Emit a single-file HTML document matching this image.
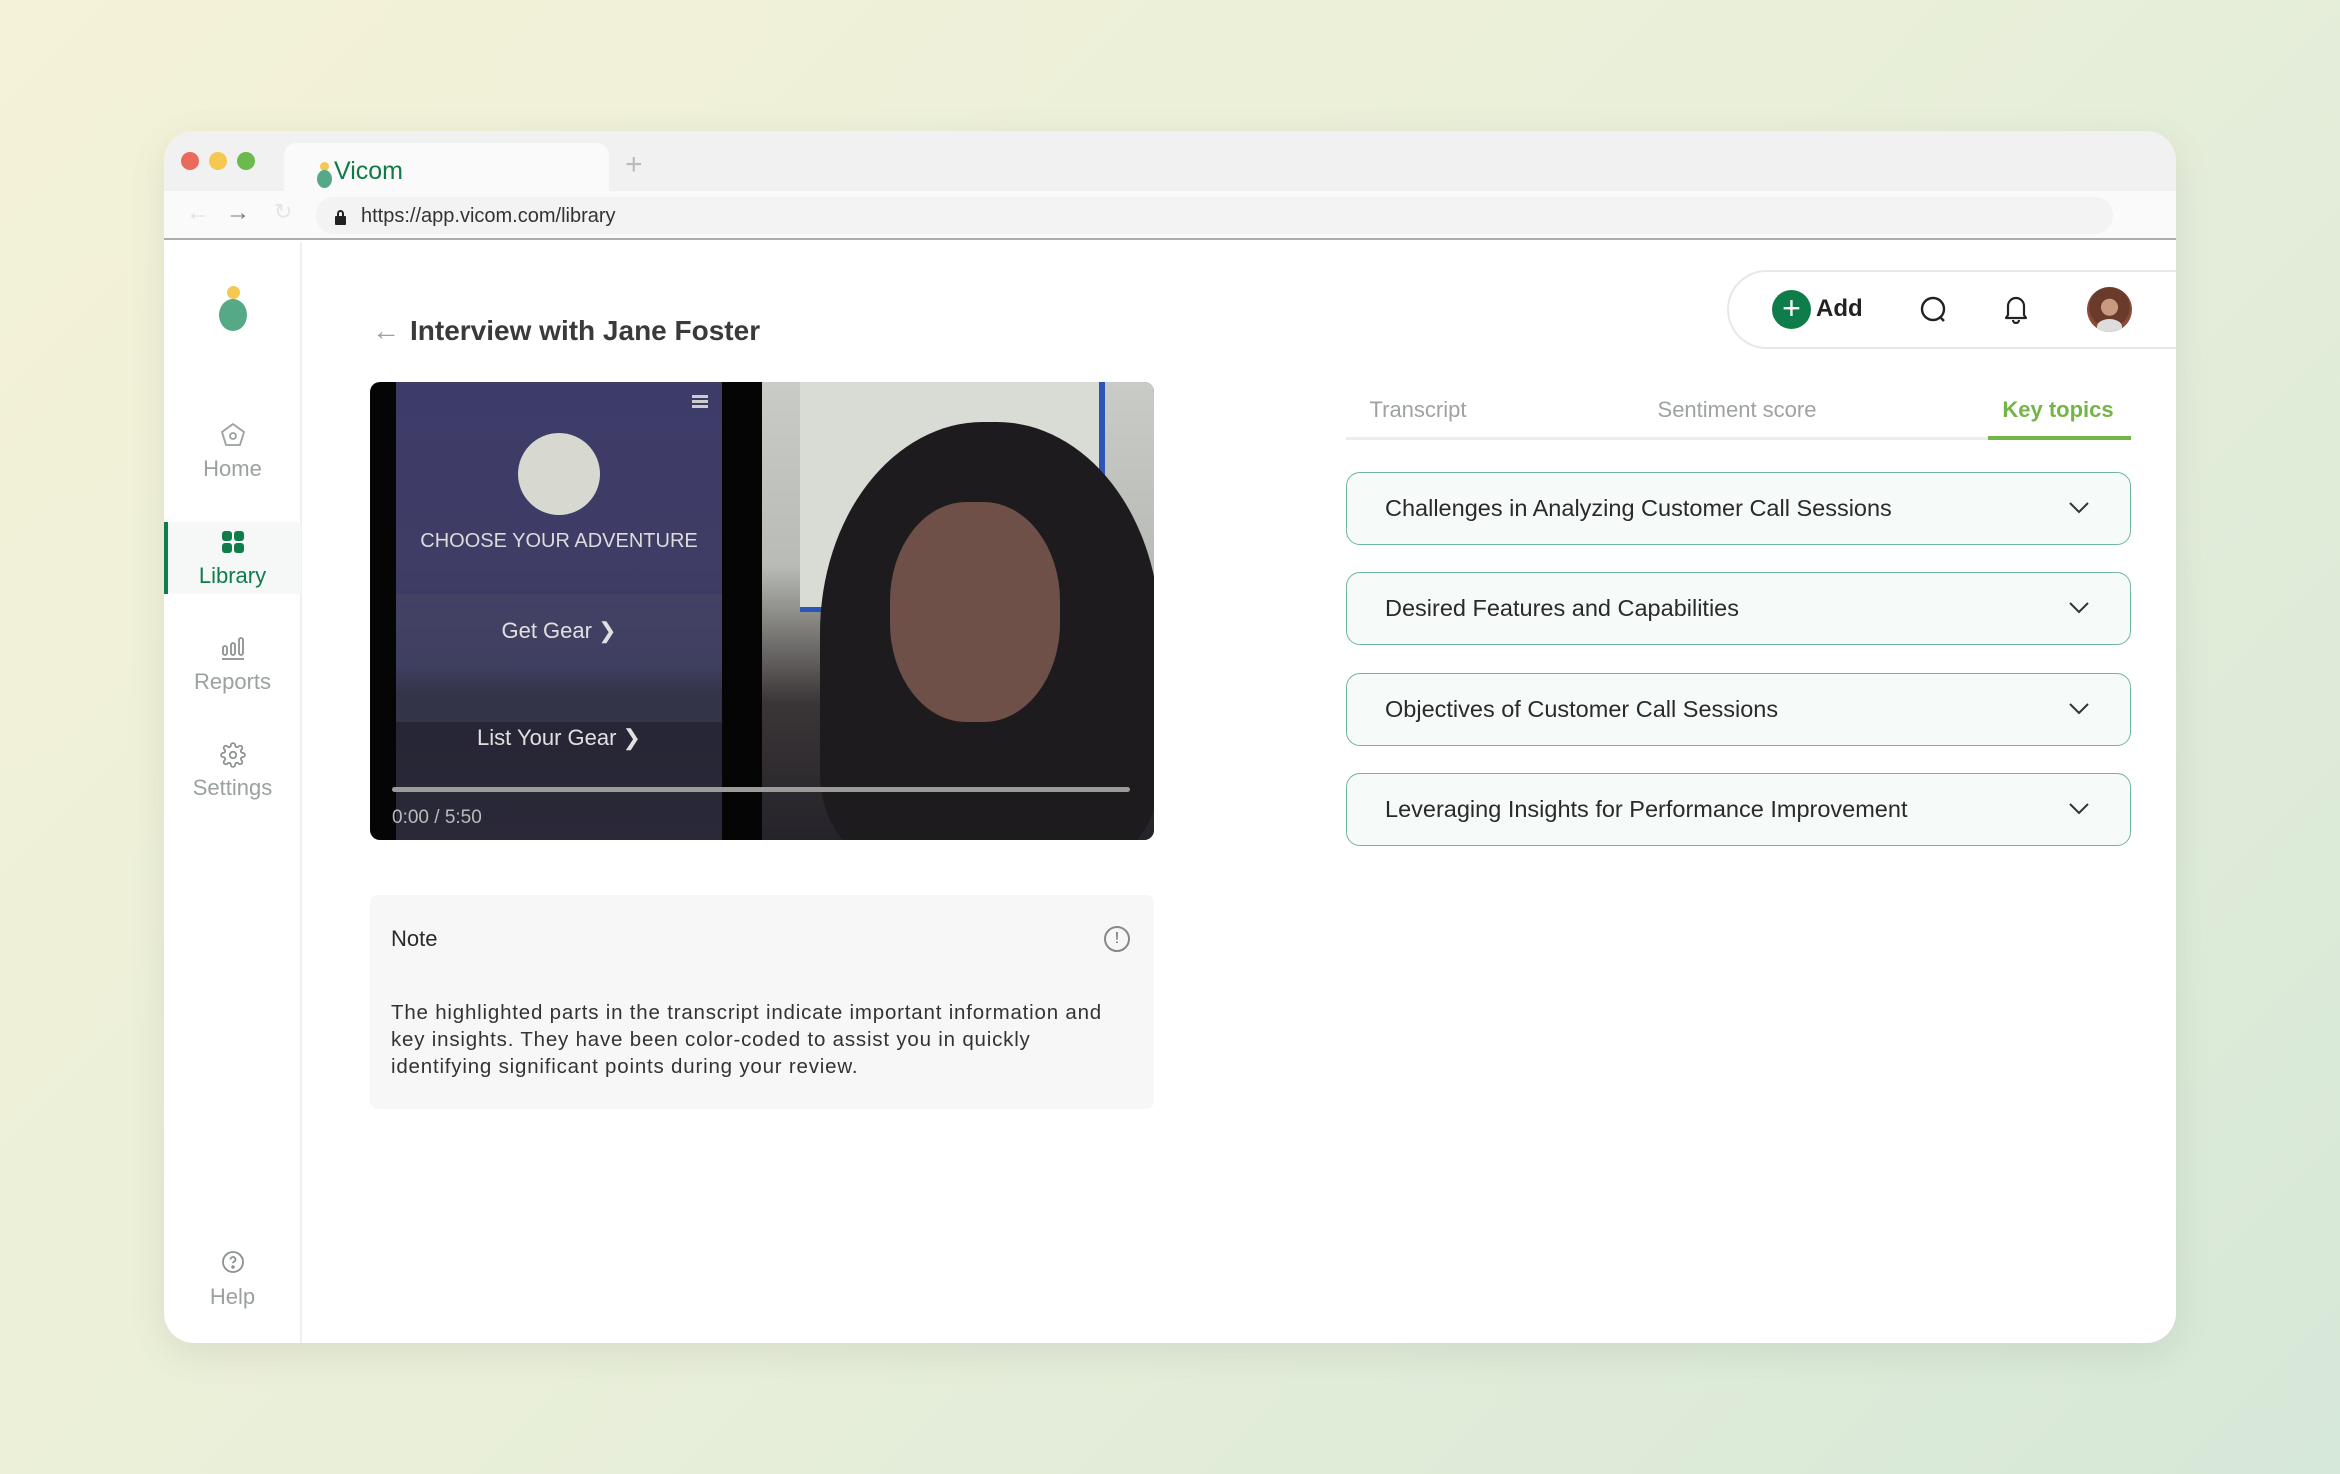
<!DOCTYPE html>
<html><head><meta charset="utf-8"><style>
*{margin:0;padding:0;box-sizing:border-box}
body{width:2340px;height:1474px;overflow:hidden;font-family:"Liberation Sans",sans-serif;background:linear-gradient(135deg,#f4f2d8 0%,#e9efd9 50%,#d6e8d8 100%);position:relative}
.abs{position:absolute}
.win{left:164px;top:131px;width:2012px;height:1212px;border-radius:30px;background:#fff;overflow:hidden;box-shadow:0 10px 40px rgba(0,0,0,.08)}
.tabbar{left:0;top:0;width:2012px;height:60px;background:#f1f1f1}
.addr{left:0;top:60px;width:2012px;height:49px;background:#fafafa;border-bottom:2px solid #a9adab}
.dot{width:18px;height:18px;border-radius:50%;top:21px}
.side .it{position:absolute;left:0;width:137px;text-align:center;font-size:22px;color:#9aa19e}
.acc{position:absolute;left:1346px;width:785px;height:73px;border:1.5px solid #6fb79a;border-radius:14px;background:#f6faf9;font-size:23.5px;color:#2a2a2a;padding-left:38px;line-height:70px}
.acc svg{position:absolute;right:40px;top:28px}
</style></head><body>
<div class="abs win">
 <div class="abs tabbar"></div>
 <div class="abs dot" style="left:17px;background:#ea6a5e"></div>
 <div class="abs dot" style="left:45px;background:#f5c851"></div>
 <div class="abs dot" style="left:73px;background:#6cb94d"></div>
 <div class="abs" style="left:120px;top:12px;width:325px;height:50px;background:#fafafa;border-radius:12px 12px 0 0"></div>
 <div class="abs" style="left:156px;top:31px;width:9px;height:9px;border-radius:50%;background:#f5c851"></div>
 <div class="abs" style="left:153px;top:39px;width:15px;height:18px;border-radius:50%;background:#55a986"></div>
 <div class="abs" style="left:170px;top:26px;font-size:25px;color:#0e7a45">Vicom</div>
 <div class="abs" style="left:461px;top:17px;font-size:30px;color:#bbb">+</div>
 <div class="abs addr"></div>
 <div class="abs" style="left:152px;top:66px;width:1797px;height:37px;background:#f3f3f3;border-radius:18px"></div>
 <div class="abs" style="left:22px;top:68px;font-size:24px;color:#ddd">←</div>
 <div class="abs" style="left:62px;top:68px;font-size:24px;color:#777">→</div>
 <div class="abs" style="left:110px;top:68px;font-size:22px;color:#e4e4e4">↻</div>
 <div class="abs" style="left:171px;top:85px;width:11px;height:9px;background:#222;border-radius:1px"></div>
 <div class="abs" style="left:173px;top:79px;width:7px;height:9px;border:2px solid #222;border-radius:4px 4px 0 0"></div>
 <div class="abs" style="left:197px;top:74px;font-size:20px;color:#333">https://app.vicom.com/library</div>

 <div class="abs side" style="left:0;top:111px;width:138px;height:1101px;border-right:2px solid #f0f0f0">
  <div class="abs" style="left:63px;top:44px;width:13px;height:13px;border-radius:50%;background:#f5c851"></div>
  <div class="abs" style="left:55px;top:57px;width:28px;height:32px;border-radius:50%;background:#55a986"></div>
  <svg class="abs" style="left:56px;top:180px" width="26" height="26" viewBox="0 0 26 26" fill="none" stroke="#9aa19e" stroke-width="1.8"><path d="M13 2L24 10L20 23H6L2 10Z" stroke-linejoin="round"/><circle cx="13" cy="14" r="3"/></svg>
  <div class="it" style="top:214px">Home</div>
  <div class="abs" style="left:0;top:280px;width:137px;height:72px;background:#f5f8f7;border-left:4px solid #0f7d4a"></div>
  <div class="abs" style="left:58px;top:289px;width:10px;height:10px;border-radius:3px;background:#0f7d4a"></div>
  <div class="abs" style="left:70px;top:289px;width:10px;height:10px;border-radius:3px;background:#0f7d4a"></div>
  <div class="abs" style="left:58px;top:301px;width:10px;height:10px;border-radius:3px;background:#0f7d4a"></div>
  <div class="abs" style="left:70px;top:301px;width:10px;height:10px;border-radius:3px;background:#0f7d4a"></div>
  <div class="it" style="top:321px;color:#0f7d4a">Library</div>
  <svg class="abs" style="left:56px;top:392px" width="26" height="26" viewBox="0 0 26 26" fill="none" stroke="#8a918e" stroke-width="1.8"><rect x="3" y="12" width="4" height="9" rx="2"/><rect x="11" y="9" width="4" height="12" rx="2"/><rect x="19" y="4" width="4" height="17" rx="2"/><path d="M2 25H24"/></svg>
  <div class="it" style="top:427px">Reports</div>
  <svg class="abs" style="left:56px;top:500px" width="26" height="26" viewBox="0 0 24 24" fill="none" stroke="#8a918e" stroke-width="1.6"><circle cx="12" cy="12" r="3"/><path d="M19.4 15a1.7 1.7 0 0 0 .3 1.8l.1.1a2 2 0 1 1-2.8 2.8l-.1-.1a1.7 1.7 0 0 0-2.9 1.2V21a2 2 0 1 1-4 0v-.1a1.7 1.7 0 0 0-2.9-1.2l-.1.1a2 2 0 1 1-2.8-2.8l.1-.1a1.7 1.7 0 0 0-1.2-2.9H3a2 2 0 1 1 0-4h.1a1.7 1.7 0 0 0 1.2-2.9l-.1-.1a2 2 0 1 1 2.8-2.8l.1.1a1.7 1.7 0 0 0 2.9-1.2V3a2 2 0 1 1 4 0v.1a1.7 1.7 0 0 0 2.9 1.2l.1-.1a2 2 0 1 1 2.8 2.8l-.1.1a1.7 1.7 0 0 0 1.2 2.9H21a2 2 0 1 1 0 4h-.1a1.7 1.7 0 0 0-1.5 1z"/></svg>
  <div class="it" style="top:533px">Settings</div>
  <svg class="abs" style="left:57px;top:1008px" width="24" height="24" viewBox="0 0 24 24" fill="none" stroke="#8a918e" stroke-width="1.8"><circle cx="12" cy="12" r="10"/><path d="M9.5 9.5a2.5 2.5 0 1 1 3.5 2.3c-.7.3-1 .8-1 1.5"/><circle cx="12" cy="17" r=".8" fill="#8a918e"/></svg>
  <div class="it" style="top:1042px">Help</div>
 </div>

 <div class="abs" style="left:208px;top:184px;font-size:28px;color:#9aa19e">←</div>
 <div class="abs" style="left:246px;top:184px;font-size:28px;font-weight:bold;color:#3a3a3a">Interview with Jane Foster</div>

 <div class="abs" style="left:206px;top:251px;width:784px;height:458px;border-radius:10px;overflow:hidden;background:#050505">
  <div class="abs" style="left:26px;top:0;width:326px;height:458px;background:linear-gradient(180deg,#3d3b68 0%,#3f3d66 40%,#36365a 62%,#262535 68%,#2a2938 100%)"></div>
  <div class="abs" style="left:26px;top:212px;width:326px;height:128px;background:rgba(80,80,110,.35)"></div>
  <div class="abs" style="left:322px;top:13px;width:16px;height:3px;background:#ccc;box-shadow:0 5px 0 #ccc,0 10px 0 #ccc"></div>
  <div class="abs" style="left:148px;top:51px;width:82px;height:82px;border-radius:50%;background:#d7d9d1"></div>
  <div class="abs" style="left:26px;top:148px;width:326px;text-align:center;font-size:20px;color:#dcdcdc">CHOOSE YOUR ADVENTURE</div>
  <div class="abs" style="left:26px;top:236px;width:326px;text-align:center;font-size:22px;color:#e0e0e0">Get Gear ❯</div>
  <div class="abs" style="left:26px;top:343px;width:326px;text-align:center;font-size:22px;color:#e0e0e0">List Your Gear ❯</div>
  <div class="abs" style="left:392px;top:0;width:392px;height:458px;background:linear-gradient(180deg,#c9ccc6 0%,#b9bcb6 40%,#3a3536 70%,#25232a 100%)"></div>
  <div class="abs" style="left:430px;top:0;width:305px;height:230px;background:#d9dbd5;border-right:6px solid #2b55b6;border-bottom:5px solid #2b55b6"></div>
  <div class="abs" style="left:450px;top:40px;width:340px;height:440px;border-radius:48% 48% 20% 20%;background:#1e1b1e"></div>
  <div class="abs" style="left:520px;top:120px;width:170px;height:220px;border-radius:45%;background:#6e5048"></div>
  <div class="abs" style="left:22px;top:405px;width:738px;height:5px;border-radius:3px;background:#9a9c98"></div>
  <div class="abs" style="left:22px;top:425px;font-size:19px;color:#bbb">0:00 / 5:50</div>
 </div>

 <div class="abs" style="left:206px;top:764px;width:784px;height:214px;background:#f7f7f7;border-radius:8px"></div>
 <div class="abs" style="left:227px;top:795px;font-size:22px;color:#2a2a2a">Note</div>
 <div class="abs" style="left:940px;top:795px;width:26px;height:26px;border:2px solid #888;border-radius:50%;text-align:center;font-size:16px;line-height:22px;color:#666">!</div>
 <div class="abs" style="left:227px;top:868px;white-space:nowrap;font-size:20.5px;line-height:27px;color:#333;letter-spacing:.8px">The highlighted parts in the transcript indicate important information and<br>key insights. They have been color-coded to assist you in quickly<br>identifying significant points during your review.</div>

 <div class="abs" style="left:1563px;top:139px;width:470px;height:79px;border:2px solid #e6e8e6;border-radius:40px 0 0 40px;border-right:none"></div>
 <div class="abs" style="left:1608px;top:159px;width:39px;height:39px;border-radius:50%;background:#0f7d4a;color:#fff;text-align:center;font-size:32px;line-height:37px">+</div>
 <div class="abs" style="left:1652px;top:164px;font-size:24px;font-weight:bold;color:#222">Add</div>
 <svg class="abs" style="left:1755px;top:164px" width="30" height="30" viewBox="0 0 30 30" fill="none" stroke="#222" stroke-width="2.4"><circle cx="14" cy="14" r="11"/><path d="M22 23l3 3"/></svg>
 <svg class="abs" style="left:1839px;top:163px" width="26" height="30" viewBox="0 0 26 30" fill="none" stroke="#222" stroke-width="2.2"><path d="M5 21V12a8 8 0 0 1 16 0v9l2 3H3z" stroke-linejoin="round"/><path d="M10 26a3 3 0 0 0 6 0"/></svg>
 <div class="abs" style="left:1923px;top:156px;width:45px;height:45px;border-radius:50%;background:radial-gradient(circle at 50% 45%,#c89a80 0 25%,#6a3a2a 26% 60%,#8b4a38 61%);overflow:hidden"><div class="abs" style="left:10px;top:32px;width:25px;height:15px;background:#ddd;border-radius:50% 50% 0 0"></div></div>

 <div class="abs" style="left:1182px;top:266px;font-size:22px;color:#9ea3a0;width:144px;text-align:center">Transcript</div>
 <div class="abs" style="left:1473px;top:266px;font-size:22px;color:#9ea3a0;width:200px;text-align:center">Sentiment score</div>
 <div class="abs" style="left:1824px;top:266px;font-size:22px;font-weight:bold;color:#74b548;width:140px;text-align:center">Key topics</div>
 <div class="abs" style="left:1182px;top:306px;width:785px;height:3px;background:#eceeed"></div>
 <div class="abs" style="left:1824px;top:305px;width:143px;height:4px;background:#74b548"></div>

 <div class="acc" style="left:1182px;top:341px">Challenges in Analyzing Customer Call Sessions<svg width="22" height="14" viewBox="0 0 22 14" fill="none" stroke="#333" stroke-width="2"><path d="M2 2l9 9 9-9"/></svg></div>
 <div class="acc" style="left:1182px;top:441px">Desired Features and Capabilities<svg width="22" height="14" viewBox="0 0 22 14" fill="none" stroke="#333" stroke-width="2"><path d="M2 2l9 9 9-9"/></svg></div>
 <div class="acc" style="left:1182px;top:542px">Objectives of Customer Call Sessions<svg width="22" height="14" viewBox="0 0 22 14" fill="none" stroke="#333" stroke-width="2"><path d="M2 2l9 9 9-9"/></svg></div>
 <div class="acc" style="left:1182px;top:642px">Leveraging Insights for Performance Improvement<svg width="22" height="14" viewBox="0 0 22 14" fill="none" stroke="#333" stroke-width="2"><path d="M2 2l9 9 9-9"/></svg></div>
</div>
</body></html>
